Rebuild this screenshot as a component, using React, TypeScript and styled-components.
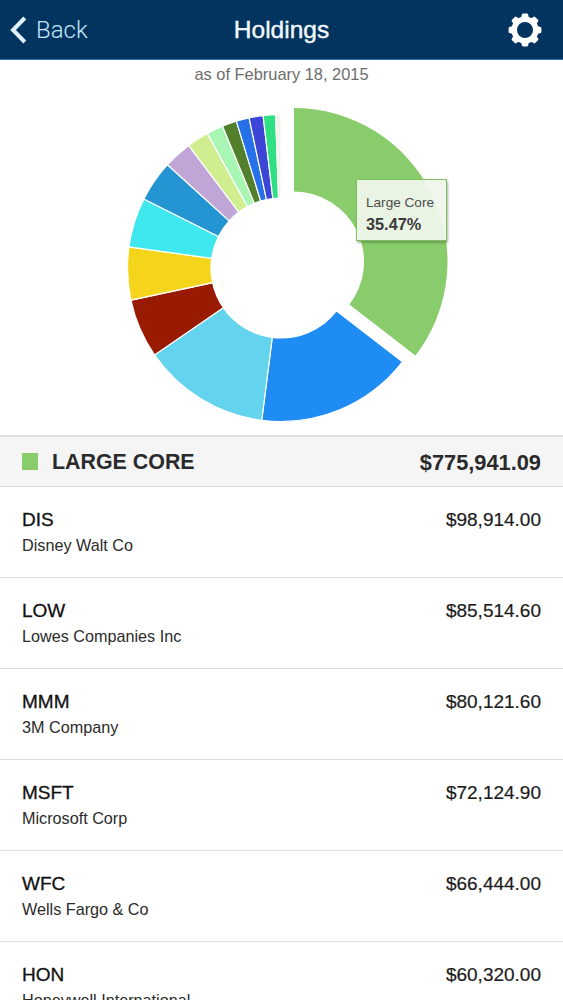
import React from "react";
import styled, { createGlobalStyle } from "styled-components";

const GlobalStyle = createGlobalStyle`
  html, body {
    margin: 0;
    padding: 0;
    background: #ffffff;
  }
  body {
    font-family: "Liberation Sans", Arial, sans-serif;
    overflow: hidden;
  }
`;

const CX = 281;
const CY = 268;
const OUTER = 153.5;
const INNER = 70;

type Slice = { from: number; to: number; color: string; dx?: number; dy?: number };

const slices: Slice[] = [
  { from: 0, to: 127.7, color: "#89cc6b", dx: 13, dy: -6.4 },
  { from: 127.7, to: 187.2, color: "#1e8cf2" },
  { from: 187.2, to: 235.5, color: "#63d3ee" },
  { from: 235.5, to: 257.9, color: "#981a00" },
  { from: 257.9, to: 277.9, color: "#f4d51c" },
  { from: 277.9, to: 296.7, color: "#3fe7ee" },
  { from: 296.7, to: 312.3, color: "#2495d2" },
  { from: 312.3, to: 323, color: "#c0a6d6" },
  { from: 323, to: 331.3, color: "#cfee90" },
  { from: 331.3, to: 337.6, color: "#a9f6b4" },
  { from: 337.6, to: 343.1, color: "#517f2c" },
  { from: 343.1, to: 348, color: "#2670ea" },
  { from: 348, to: 353.3, color: "#3d45d6" },
  { from: 353.3, to: 358, color: "#2fe083" },
  { from: 358, to: 360, color: "#eef4ea" },
];

const point = (r: number, deg: number, cx: number, cy: number) => {
  const rad = (deg * Math.PI) / 180;
  return `${(cx + r * Math.sin(rad)).toFixed(2)} ${(cy - r * Math.cos(rad)).toFixed(2)}`;
};

const slicePath = ({ from, to, dx = 0, dy = 0 }: Slice) => {
  const cx = CX + dx;
  const cy = CY + dy;
  const large = to - from > 180 ? 1 : 0;
  return [
    `M ${point(OUTER, from, cx, cy)}`,
    `A ${OUTER} ${OUTER} 0 ${large} 1 ${point(OUTER, to, cx, cy)}`,
    `L ${point(INNER, to, cx, cy)}`,
    `A ${INNER} ${INNER} 0 ${large} 0 ${point(INNER, from, cx, cy)}`,
    "Z",
  ].join(" ");
};

const holdings = [
  { symbol: "DIS", name: "Disney Walt Co", value: "$98,914.00" },
  { symbol: "LOW", name: "Lowes Companies Inc", value: "$85,514.60" },
  { symbol: "MMM", name: "3M Company", value: "$80,121.60" },
  { symbol: "MSFT", name: "Microsoft Corp", value: "$72,124.90" },
  { symbol: "WFC", name: "Wells Fargo & Co", value: "$66,444.00" },
  { symbol: "HON", name: "Honeywell International", value: "$60,320.00" },
];

const GearIcon = () => {
  const teeth = Array.from({ length: 8 }, (_, i) => i * 45);
  return (
    <svg width="34" height="34" viewBox="0 0 34 34">
      {teeth.map((deg) => (
        <path
          key={deg}
          d="M12.8 6 L13.9 1.4 Q14.1 0.6 15 0.6 L19 0.6 Q19.9 0.6 20.1 1.4 L21.2 6 Z"
          fill="#fff"
          transform={`rotate(${deg} 17 17)`}
        />
      ))}
      <circle cx="17" cy="17" r="10.8" fill="none" stroke="#fff" strokeWidth="5.6" />
    </svg>
  );
};

const BackIcon = () => (
  <svg width="17" height="28" viewBox="0 0 17 28">
    <path d="M14.8 2 L3 14 L14.8 26" fill="none" stroke="#dff1fb" strokeWidth="4" />
  </svg>
);

export default function App() {
  return (
    <Page>
      <GlobalStyle />
      <Header>
        <BackButton>
          <BackIcon />
          <BackLabel>Back</BackLabel>
        </BackButton>
        <Title>Holdings</Title>
        <Settings>
          <GearIcon />
        </Settings>
      </Header>
      <AsOf>as of February 18, 2015</AsOf>
      <ChartArea>
        <svg width="563" height="351" viewBox="0 84 563 351">
          {slices.map((s) => (
            <path key={s.from} d={slicePath(s)} fill={s.color} stroke="#ffffff" strokeWidth={s.from === 0 ? 0 : 1.2} />
          ))}
        </svg>
        <Tooltip>
          <TooltipLabel>Large Core</TooltipLabel>
          <TooltipValue>35.47%</TooltipValue>
        </Tooltip>
      </ChartArea>
      <SectionHeader>
        <SectionName>
          <Swatch />
          <SectionTitle>LARGE CORE</SectionTitle>
        </SectionName>
        <SectionTotal>$775,941.09</SectionTotal>
      </SectionHeader>
      {holdings.map((h) => (
        <Row key={h.symbol}>
          <div>
            <Symbol>{h.symbol}</Symbol>
            <CompanyName>{h.name}</CompanyName>
          </div>
          <Value>{h.value}</Value>
        </Row>
      ))}
    </Page>
  );
}

const Page = styled.div`
  width: 563px;
  height: 1000px;
  overflow: hidden;
  background: #ffffff;
`;

const Header = styled.header`
  height: 59px;
  background: #03345f;
  border-bottom: 1px solid #2f74b0;
  display: grid;
  grid-template-columns: 1fr auto 1fr;
  align-items: center;
  padding: 0 21px 0 10px;
`;

const BackButton = styled.div`
  display: flex;
  align-items: center;
  gap: 9px;
`;

const BackLabel = styled.span`
  font-family: "Roboto", "Liberation Sans", sans-serif;
  font-weight: 300;
  font-size: 24px;
  color: #c4e6f8;
`;

const Title = styled.h1`
  margin: 0 0 0 11px;
  font-size: 24.5px;
  font-weight: 400;
  color: #f2f8fb;
  -webkit-text-stroke: 0.4px #f2f8fb;
`;

const Settings = styled.div`
  display: flex;
  justify-content: flex-end;
  padding-top: 1px;
`;

const AsOf = styled.div`
  text-align: center;
  height: 24px;
  line-height: 29px;
  font-size: 16.4px;
  color: #6d6d6d;
`;

const ChartArea = styled.div`
  position: relative;
  height: 351px;

  svg {
    display: block;
  }
`;

const Tooltip = styled.div`
  position: absolute;
  left: 356px;
  top: 95px;
  width: 91px;
  height: 62px;
  box-sizing: border-box;
  padding: 13px 9px 0;
  background: rgba(240, 247, 236, 0.94);
  border: 1px solid #7fbf62;
  box-shadow: 1px 2px 2px rgba(70, 110, 50, 0.45);
`;

const TooltipLabel = styled.div`
  font-size: 13.6px;
  line-height: 20px;
  color: #4d4d4d;
`;

const TooltipValue = styled.div`
  font-size: 16.3px;
  line-height: 22px;
  font-weight: 700;
  color: #3a3a3a;
`;

const SectionHeader = styled.div`
  height: 52px;
  box-sizing: border-box;
  display: flex;
  align-items: center;
  justify-content: space-between;
  padding: 2px 22px 0;
  background: #f5f5f6;
  border-top: 2px solid #e0e0e0;
  border-bottom: 1px solid #dcdcdc;
`;

const SectionName = styled.div`
  display: flex;
  align-items: center;
  gap: 14px;
`;

const Swatch = styled.span`
  width: 16px;
  height: 17px;
  margin-top: -3px;
  background: #89cc6b;
`;

const SectionTitle = styled.span`
  font-size: 21.4px;
  font-weight: 700;
  color: #2a2a2a;
`;

const SectionTotal = styled.span`
  font-size: 21.8px;
  font-weight: 700;
  color: #2a2a2a;
`;

const Row = styled.div`
  height: 91px;
  box-sizing: border-box;
  display: flex;
  justify-content: space-between;
  align-items: flex-start;
  padding: 21px 22px 0;
  border-bottom: 1px solid #dedede;
`;

const Symbol = styled.div`
  font-size: 19px;
  line-height: 24px;
  color: #111111;
  -webkit-text-stroke: 0.3px #111111;
`;

const CompanyName = styled.div`
  margin-top: 2px;
  font-size: 16.2px;
  line-height: 22px;
  color: #2b2b2b;
`;

const Value = styled.div`
  font-size: 19px;
  line-height: 24px;
  color: #1c1c1c;
  -webkit-text-stroke: 0.2px #1c1c1c;
`;
